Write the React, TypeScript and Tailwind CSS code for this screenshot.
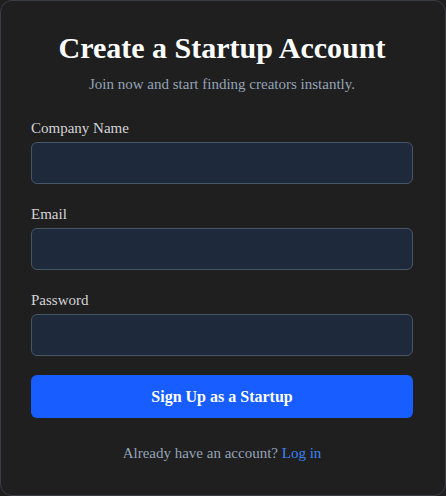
import React from 'react';

const serif = { fontFamily: '"Liberation Serif", "Times New Roman", serif' };

const Field: React.FC<{ label: string; type?: string }> = ({ label, type = 'text' }) => (
  <div className="mb-[19px]">
    <label className="block text-[15px] leading-[22px] text-[#d4d4d8] mb-[3px]">{label}</label>
    <input
      type={type}
      className="block w-full h-[42px] rounded-md border border-[#475569] bg-[#1e293b] px-3 text-[15px] text-white outline-none"
    />
  </div>
);

export default function App() {
  return (
    <div className="w-[446px] h-[496px] bg-[#1f1f1f]" style={serif}>
      <div className="h-full rounded-xl border border-[#3a3d44] bg-[#1f1f1f] pl-[30px] pr-[32px] pt-[29px]">
        <h1 className="text-center text-[30px] leading-[36px] font-bold text-white">
          Create a Startup Account
        </h1>
        <p className="mt-[7px] text-center text-[15px] leading-[22px] text-[#94a3b8]">
          Join now and start finding creators instantly.
        </p>

        <form className="mt-[22px]" onSubmit={(e) => e.preventDefault()}>
          <Field label="Company Name" />
          <Field label="Email" type="email" />
          <Field label="Password" type="password" />
          <button
            type="submit"
            className="block w-full h-[43px] mt-[2px] rounded-md bg-[#175dff] text-[16px] font-bold text-white"
          >
            Sign Up as a Startup
          </button>
        </form>

        <p className="mt-[24px] text-center text-[15px] leading-[22px] text-[#94a3b8]">
          Already have an account? <a href="#" className="text-[#3b82f6]">Log in</a>
        </p>
      </div>
    </div>
  );
}
